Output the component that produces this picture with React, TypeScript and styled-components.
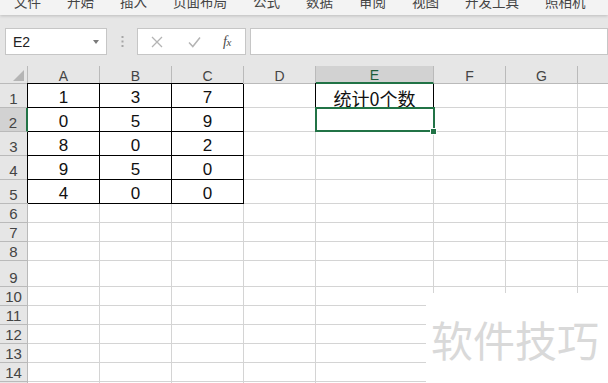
import React from "react";
import styled, { createGlobalStyle } from "styled-components";

const GlobalStyle = createGlobalStyle`
  html, body {
    margin: 0;
    padding: 0;
    background: #ffffff;
    overflow: hidden;
  }
`;

const COL_W = [72, 72, 72, 72, 118, 72, 72, 72];
const ROW_H = [24, 24, 24, 24, 24, 19, 19, 19, 26, 19, 19, 19, 19, 19, 19];
const COLS = ["A", "B", "C", "D", "E", "F", "G", "H"];
const MENU = ["文件", "开始", "插入", "页面布局", "公式", "数据", "审阅", "视图", "开发工具", "照相机"];

const DATA: (string | number)[][] = [
  [1, 3, 7, "", "统计0个数"],
  [0, 5, 9],
  [8, 0, 2],
  [9, 5, 0],
  [4, 0, 0],
];

const GREEN = "#217346";

const Page = styled.div`
  position: relative;
  width: 608px;
  height: 383px;
  overflow: hidden;
  background: #fff;
`;

const MenuBar = styled.div`
  position: relative;
  z-index: 2;
  height: 15px;
  background: #f3f3f3;
  display: flex;
  gap: 26px;
  padding-left: 14px;
  box-shadow: 0 1px 3px rgba(0, 0, 0, 0.18);
  overflow: hidden;
`;

const MenuItem = styled.span`
  font-family: "Noto Sans CJK SC", sans-serif;
  font-size: 13.5px;
  line-height: 14px;
  margin-top: -6px;
  color: #444;
  white-space: nowrap;
`;

const Toolbar = styled.div`
  height: 51px;
  background: #e6e6e6;
  display: flex;
  align-items: flex-start;
  padding: 13px 0 0 5px;
  box-sizing: border-box;
`;

const Box = styled.div<{ $w?: number }>`
  height: 27px;
  box-sizing: border-box;
  background: #fff;
  border: 1px solid #c6c6c6;
  ${(p) => (p.$w ? `width: ${p.$w}px;` : "flex: 1;")}
  display: flex;
  align-items: center;
  position: relative;
`;

const NameText = styled.span`
  font-family: "Liberation Sans", Arial, sans-serif;
  font-size: 14px;
  color: #222;
  padding-left: 7px;
  flex: 1;
`;

const DropArrow = styled.span`
  width: 0;
  height: 0;
  border-left: 3px solid transparent;
  border-right: 3px solid transparent;
  border-top: 4px solid #7a7a7a;
  margin-right: 7px;
`;

const Dots = styled.div`
  width: 30px;
  height: 27px;
  display: flex;
  align-items: center;
  justify-content: center;
`;

const FxIcons = styled.div`
  display: flex;
  align-items: center;
  width: 100%;
  padding-left: 13px;
  box-sizing: border-box;
`;

const IconSlot = styled.span<{ $w: number }>`
  width: ${(p) => p.$w}px;
  display: flex;
  align-items: center;
`;

const Fx = styled.span`
  font-family: "Liberation Serif", "Times New Roman", serif;
  font-style: italic;
  font-size: 14px;
  color: #4a4a4a;
  letter-spacing: -0.5px;
  small {
    font-size: 11px;
  }
`;

const Gap = styled.div<{ $w: number }>`
  width: ${(p) => p.$w}px;
  flex: none;
`;

const Sheet = styled.div`
  display: grid;
  grid-template-columns: 28px ${COL_W.map((w) => `${w}px`).join(" ")};
  grid-template-rows: 18px ${ROW_H.map((h) => `${h}px`).join(" ")};
  width: 700px;
`;

const Corner = styled.div`
  background: #e6e6e6;
  border-right: 1px solid #bababa;
  border-bottom: 1px solid #bababa;
  box-sizing: border-box;
  display: flex;
  align-items: flex-end;
  justify-content: flex-end;
  padding: 0 3px 2px 0;
`;

const ColHeader = styled.div<{ $sel?: boolean }>`
  background: ${(p) => (p.$sel ? "#d2d2d2" : "#e6e6e6")};
  border-right: 1px solid #bababa;
  border-bottom: ${(p) => (p.$sel ? `2px solid ${GREEN}` : "1px solid #bababa")};
  ${(p) => (p.$sel ? "position: relative;" : "")}
  box-sizing: border-box;
  display: flex;
  align-items: flex-end;
  justify-content: center;
  font-family: "Liberation Sans", Arial, sans-serif;
  font-size: 14px;
  line-height: 14px;
  color: ${(p) => (p.$sel ? "#1d5c3a" : "#444")};
`;

const RowHeader = styled.div<{ $sel?: boolean }>`
  background: ${(p) => (p.$sel ? "#d2d2d2" : "#e6e6e6")};
  border-right: ${(p) => (p.$sel ? `2px solid ${GREEN}` : "1px solid #bababa")};
  border-bottom: 1px solid #bababa;
  ${(p) => (p.$sel ? "position: relative;" : "")}
  box-sizing: border-box;
  display: flex;
  align-items: flex-end;
  justify-content: center;
  padding-bottom: 1px;
  font-family: "Liberation Sans", Arial, sans-serif;
  font-size: 15px;
  line-height: 15px;
  color: #444;
`;

const Cell = styled.div<{ $boxed?: boolean; $sel?: boolean; $cjk?: boolean }>`
  position: ${(p) => (p.$sel ? "relative" : "static")};
  box-sizing: border-box;
  border-right: 1px solid ${(p) => (p.$boxed ? "#000" : "#d4d4d4")};
  border-bottom: 1px solid ${(p) => (p.$boxed ? "#000" : "#d4d4d4")};
  ${(p) => (p.$boxed ? "box-shadow: -1px -1px 0 #000;" : "")}
  display: flex;
  align-items: flex-end;
  justify-content: center;
  font-family: ${(p) =>
    p.$cjk ? `"Noto Sans CJK SC", sans-serif` : `"Liberation Sans", Arial, sans-serif`};
  font-size: ${(p) => (p.$cjk ? "18px" : "17px")};
  line-height: ${(p) => (p.$cjk ? "18px" : "17px")};
  padding-bottom: ${(p) => (p.$cjk ? "0" : "1px")};
  color: #111;
  white-space: nowrap;

  ${(p) =>
    p.$sel
      ? `
    &::after {
      content: "";
      position: absolute;
      top: -1px;
      left: -1px;
      right: -2px;
      bottom: -1px;
      border: 2px solid ${GREEN};
    }
    &::before {
      content: "";
      position: absolute;
      z-index: 1;
      right: -3px;
      bottom: -3px;
      width: 5px;
      height: 5px;
      background: ${GREEN};
      box-shadow: 0 0 0 1px #fff;
    }
  `
      : ""}
`;

const Watermark = styled.div`
  position: absolute;
  left: 426px;
  top: 293px;
  right: 0;
  bottom: 0;
  background: #fff;
  display: flex;
  align-items: center;
  padding-left: 5px;
  font-family: "Noto Sans CJK SC", sans-serif;
  font-size: 42px;
  line-height: 42px;
  color: #d9d9d9;
  white-space: nowrap;
  padding-top: 2px;
`;

function CrossIcon() {
  return (
    <svg width="12" height="12" viewBox="0 0 12 12">
      <path d="M1 1 L11 11 M11 1 L1 11" stroke="#b4b4b4" strokeWidth="1.3" fill="none" />
    </svg>
  );
}

function CheckIcon() {
  return (
    <svg width="13" height="12" viewBox="0 0 13 12">
      <path d="M1 6.5 L4.8 10.5 L12 1.5" stroke="#b4b4b4" strokeWidth="1.5" fill="none" />
    </svg>
  );
}

function VDots() {
  return (
    <svg width="3" height="11" viewBox="0 0 3 11">
      <rect x="0.5" y="0" width="2" height="2" fill="#a6a6a6" />
      <rect x="0.5" y="4.5" width="2" height="2" fill="#a6a6a6" />
      <rect x="0.5" y="9" width="2" height="2" fill="#a6a6a6" />
    </svg>
  );
}

function CornerMark() {
  return (
    <svg width="11" height="11" viewBox="0 0 11 11">
      <polygon points="0,11 11,11 11,0" fill="#b5b5b5" />
    </svg>
  );
}

export default function App() {
  return (
    <Page>
      <GlobalStyle />
      <MenuBar>
        {MENU.map((m) => (
          <MenuItem key={m}>{m}</MenuItem>
        ))}
      </MenuBar>
      <Toolbar>
        <Box $w={102}>
          <NameText>E2</NameText>
          <DropArrow />
        </Box>
        <Dots>
          <VDots />
        </Dots>
        <Box $w={109}>
          <FxIcons>
            <IconSlot $w={37}>
              <CrossIcon />
            </IconSlot>
            <IconSlot $w={35}>
              <CheckIcon />
            </IconSlot>
            <Fx>
              f<small>x</small>
            </Fx>
          </FxIcons>
        </Box>
        <Gap $w={4} />
        <Box />
      </Toolbar>
      <Sheet>
        <Corner>
          <CornerMark />
        </Corner>
        {COLS.map((c) => (
          <ColHeader key={c} $sel={c === "E"}>
            {c}
          </ColHeader>
        ))}
        {ROW_H.map((_, r) => (
          <React.Fragment key={r}>
            <RowHeader $sel={r === 1}>{r + 1}</RowHeader>
            {COLS.map((c, ci) => {
              const v = DATA[r]?.[ci] ?? "";
              const boxed = (r < 5 && ci < 3) || (r === 0 && ci === 4);
              return (
                <Cell
                  key={c}
                  $boxed={boxed}
                  $sel={r === 1 && ci === 4}
                  $cjk={typeof v === "string" && v.length > 1}
                >
                  {v}
                </Cell>
              );
            })}
          </React.Fragment>
        ))}
      </Sheet>
      <Watermark>软件技巧</Watermark>
    </Page>
  );
}
